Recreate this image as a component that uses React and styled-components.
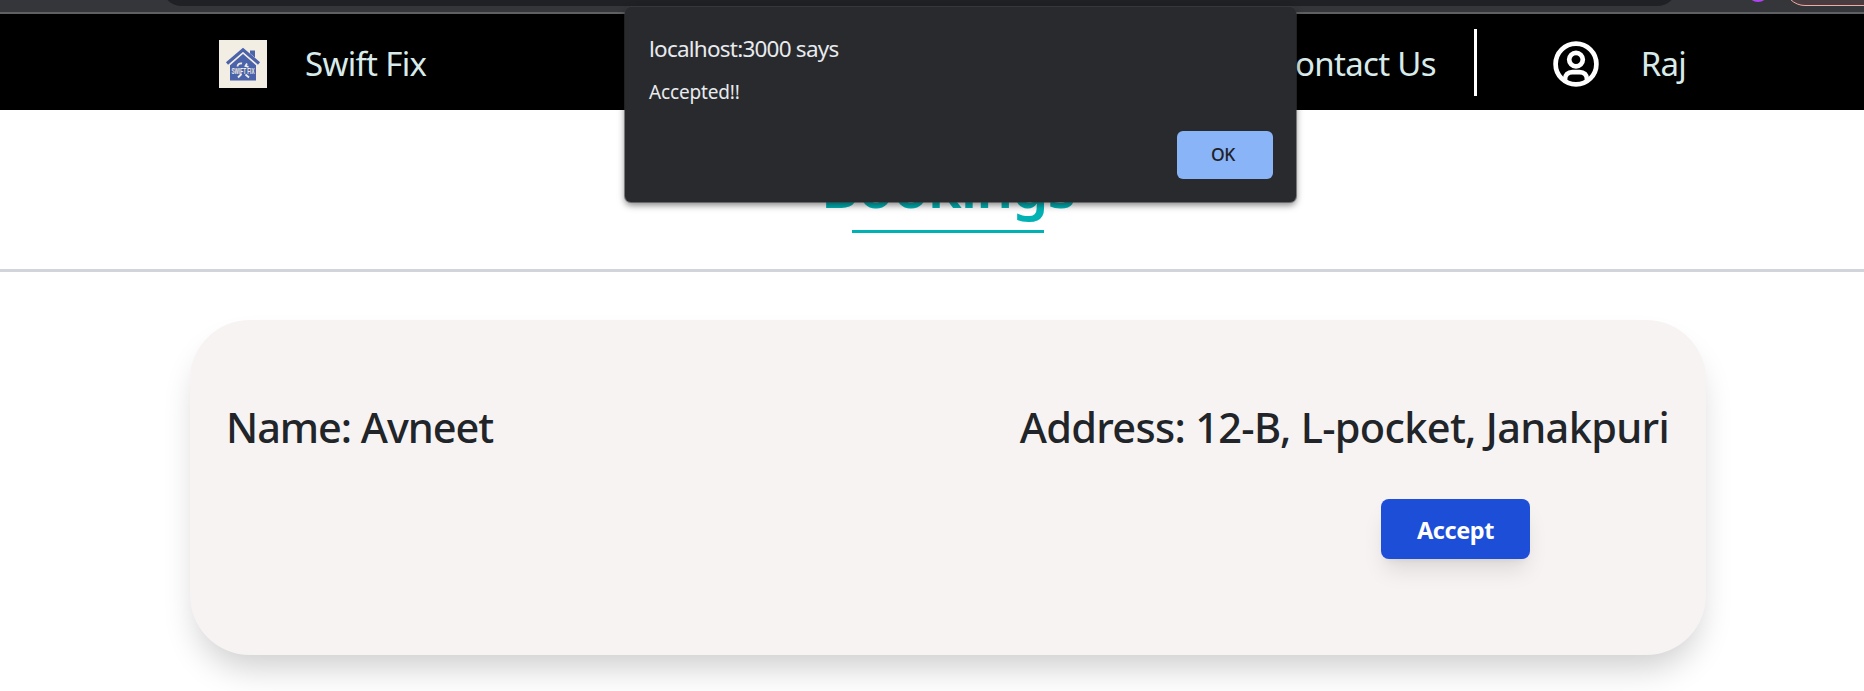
import React from "react";
import styled, { createGlobalStyle } from "styled-components";

const GlobalStyle = createGlobalStyle`
  *, *::before, *::after { box-sizing: border-box; }
  body {
    margin: 0;
    height: 691px;
    overflow: hidden;
    background: #fff;
    color: #212529;
    font-family: "Noto Sans", "Open Sans", sans-serif;
  }
`;

const Page = styled.div`
  position: relative;
  display: flex;
  flex-direction: column;
  height: 691px;
  overflow: hidden;
`;

const BrowserBar = styled.div`
  display: flex;
  align-items: flex-end;
  flex: none;
  height: 14px;
  padding: 0 0 6px 161px;
  overflow: hidden;
  background: #35363a;
  border-bottom: 2px solid #5f6063;
`;

const AddressField = styled.div`
  flex: none;
  width: 1517px;
  height: 42px;
  border-radius: 21px;
  background: #202124;
`;

const ExtensionDot = styled.div`
  flex: none;
  width: 22px;
  height: 22px;
  margin: 0 0 4px 69px;
  border-radius: 50%;
  background: #b142f5;
`;

const UpdatePill = styled.div`
  flex: none;
  width: 140px;
  height: 42px;
  margin-left: 15px;
  border: 1.5px solid #f2aaa4;
  border-radius: 21px;
  background: #483c40;
`;

const Nav = styled.nav`
  display: flex;
  align-items: center;
  justify-content: space-between;
  flex: none;
  height: 96px;
  padding: 3px 178px 0 219px;
  background: #000;
`;

const NavGroup = styled.div`
  display: flex;
  align-items: center;
`;

const NavLink = styled.span`
  color: #d9eaea;
  font-size: 33px;
  line-height: 48px;
  letter-spacing: ${(p) => p.$tracking || "-0.8px"};
  white-space: nowrap;
  margin-left: ${(p) => p.$gap || 0}px;
`;

const Divider = styled.div`
  width: 3px;
  height: 67px;
  margin: 0 75px 2px 38px;
  background: #fff;
`;

const TitleSection = styled.header`
  display: flex;
  flex-direction: column;
  align-items: center;
  flex: none;
  height: 162px;
  padding: 37px 0 0 32px;
  border-bottom: 3px solid #d1d5db;
`;

const Title = styled.h1`
  margin: 0;
  color: #00b2b4;
  font-size: 58px;
  font-weight: 600;
  line-height: 78px;
  letter-spacing: -1px;
`;

const Underline = styled.div`
  width: 192px;
  height: 3px;
  margin-top: 5px;
  background: #00b2b4;
`;

const Card = styled.section`
  flex: none;
  width: 1516px;
  height: 335px;
  margin: 48px 0 0 190px;
  padding: 78px 37px 0 36px;
  border-radius: 60px;
  background: #f7f3f2;
  box-shadow: 0 20px 34px -8px rgba(0, 0, 0, 0.2);
`;

const CardRow = styled.div`
  display: flex;
  justify-content: space-between;
`;

const Detail = styled.h2`
  margin: 0;
  font-size: 41.5px;
  font-weight: 500;
  line-height: 58px;
  letter-spacing: ${(p) => p.$tracking};
  white-space: nowrap;
`;

const Actions = styled.div`
  display: flex;
  justify-content: flex-end;
  padding: 43px 139px 0 0;
`;

const AcceptButton = styled.button`
  width: 149px;
  height: 60px;
  padding: 2px 0 0;
  border: 0;
  border-radius: 8px;
  background: #1d4ed8;
  box-shadow: 0 15px 22px -4px rgba(0, 0, 0, 0.1), 0 6px 9px -6px rgba(0, 0, 0, 0.1);
  color: #fff;
  font-family: inherit;
  font-size: 23.5px;
  font-weight: 700;
  letter-spacing: -0.4px;
`;

const Dialog = styled.div`
  position: absolute;
  top: 7px;
  left: 625px;
  display: flex;
  flex-direction: column;
  width: 671px;
  height: 195px;
  padding: 26px 23px 23px 24px;
  border-radius: 6px;
  background: #292a2d;
  box-shadow: 0 0 0 1px rgba(60, 60, 65, 0.55), 0 3px 7px rgba(0, 0, 0, 0.5);
  color: #e8eaed;
`;

const DialogTitle = styled.div`
  font-size: 22.5px;
  line-height: 32px;
  letter-spacing: -0.77px;
`;

const DialogText = styled.div`
  margin-top: 13px;
  font-size: 19px;
  line-height: 28px;
  letter-spacing: -0.15px;
`;

const OkButton = styled.button`
  align-self: flex-end;
  width: 96px;
  height: 48px;
  margin-top: auto;
  padding: 0 4px 2px 0;
  border: 0;
  border-radius: 6px;
  background: #8ab4f8;
  color: #202124;
  font-family: inherit;
  font-size: 17.5px;
  font-weight: 500;
  letter-spacing: -0.5px;
`;

const LogoLabel = styled.text`
  fill: #f3eee3;
  font-family: "Liberation Sans Narrow", "Liberation Sans", sans-serif;
  font-size: 8.5px;
  font-weight: 700;
`;

const Logo = () => (
  <svg width="48" height="48" viewBox="0 0 48 48">
    <rect width="48" height="48" fill="#f3eee3" />
    <path d="M31 10.5h5v9l-5-4z" fill="#4b63aa" />
    <path d="M11 24L24 12.5 37 24v16.5H11z" fill="#4b63aa" />
    <path d="M8 24.5L24 10.5l16 14" fill="none" stroke="#f3eee3" strokeWidth="5" />
    <path d="M8 23.5L24 9.8l16 13.7" fill="none" stroke="#4b63aa" strokeWidth="3.2" />
    <path d="M18.5 26.5c0-2 2-3.5 4.500-3M28 23.500l-1.500 2.500 3 .8M19 37.500l3.500-3.500M26.500 34.500l3.500 3" fill="none" stroke="#f3eee3" strokeWidth="1.8" />
    <LogoLabel x="12.5" y="33.500" textLength="23" lengthAdjust="spacingAndGlyphs">SWIFT FIX</LogoLabel>
  </svg>
);

const UserIcon = () => (
  <svg width="48" height="48" viewBox="0 0 48 48" fill="none" stroke="#fff" strokeWidth="4.7">
    <circle cx="24" cy="24" r="20.4" />
    <circle cx="24" cy="19.6" r="6.8" />
    <path d="M13 41v-1.5c0-4.8 3-7.4 7.4-7.4h7.2c4.4 0 7.4 2.6 7.4 7.4V41" />
  </svg>
);

export default function App() {
  return (
    <>
      <GlobalStyle />
      <Page>
        <BrowserBar>
          <AddressField />
          <ExtensionDot />
          <UpdatePill />
        </BrowserBar>
        <Nav>
          <NavGroup>
            <Logo />
            <NavLink $gap={38} $tracking="-0.7px">Swift Fix</NavLink>
          </NavGroup>
          <NavGroup>
            <NavLink $tracking="-0.7px">Contact Us</NavLink>
            <Divider />
            <UserIcon />
            <NavLink $gap={41}>Raj</NavLink>
          </NavGroup>
        </Nav>
        <TitleSection>
          <Title>Bookings</Title>
          <Underline />
        </TitleSection>
        <Card>
          <CardRow>
            <Detail $tracking="-1.05px">Name: Avneet</Detail>
            <Detail $tracking="-0.68px">Address: 12-B, L-pocket, Janakpuri</Detail>
          </CardRow>
          <Actions>
            <AcceptButton>Accept</AcceptButton>
          </Actions>
        </Card>
        <Dialog role="alertdialog">
          <DialogTitle>localhost:3000 says</DialogTitle>
          <DialogText>Accepted!!</DialogText>
          <OkButton>OK</OkButton>
        </Dialog>
      </Page>
    </>
  );
}
